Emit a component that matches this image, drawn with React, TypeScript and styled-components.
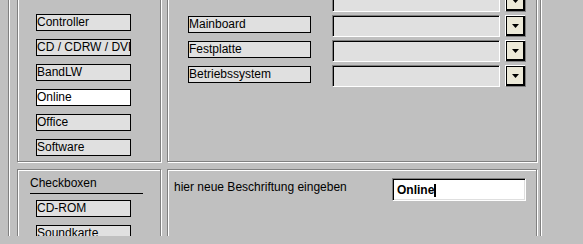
import React from "react";
import styled, { createGlobalStyle } from "styled-components";

const Global = createGlobalStyle`
  html, body { margin: 0; padding: 0; background: #c0c0c0; }
  body { font-family: "Liberation Sans", Arial, sans-serif; font-size: 12px; color: #000; }
`;

const Viewport = styled.div`
  height: 236px;
  overflow: hidden;
`;

const Scroller = styled.div`
  margin-top: -30px;
`;

const OuterGroup = styled.div`
  margin-left: 8px;
  width: 533px;
  box-sizing: border-box;
  border: 1px solid #808080;
  box-shadow: inset 1px 1px 0 #fff, 1px 1px 0 #fff;
  padding: 8px 3px 8px 8px;
`;

const Layout = styled.div`
  display: grid;
  grid-template-columns: 144px 370px;
  column-gap: 6px;
  row-gap: 7px;
`;

const Panel = styled.div<{ $pt: number; $pl: number; $h?: number }>`
  box-sizing: border-box;
  border: 1px solid #808080;
  box-shadow: inset 1px 1px 0 #fff, 1px 1px 0 #fff;
  padding: ${(p) => p.$pt}px 0 5px ${(p) => p.$pl}px;
  ${(p) => (p.$h ? `height: ${p.$h}px;` : "")}
`;

const LabelList = styled.div`
  display: flex;
  flex-direction: column;
  gap: 8px;
`;

const LabelBox = styled.div<{ $w: number; $white?: boolean }>`
  box-sizing: border-box;
  width: ${(p) => p.$w}px;
  height: 17px;
  border: 1px solid #000;
  background: ${(p) => (p.$white ? "#fff" : "#e0e0e0")};
  line-height: 15px;
  white-space: nowrap;
  overflow: hidden;
`;

const FieldGrid = styled.div`
  display: grid;
  grid-template-columns: 123px 189px 27px;
  row-gap: 3px;
  align-items: start;
`;

const FieldRow = styled.div`
  display: contents;
`;

const LabelCell = styled.div`
  padding-top: 1px;
  width: 123px;
`;

const Combo = styled.div`
  box-sizing: border-box;
  margin-left: 21px;
  width: 168px;
  height: 22px;
  background: #e0e0e0;
  border-style: solid;
  border-width: 1px;
  border-color: #808080 #fff #fff #808080;
  box-shadow: inset 1px 1px 0 #000;
`;

const DropButton = styled.div`
  box-sizing: border-box;
  margin-left: 5px;
  width: 21px;
  height: 22px;
  border-style: solid;
  border-width: 1px;
  border-color: #fff #808080 #808080 #fff;
  display: flex;
  align-items: center;
  justify-content: center;
`;

const DropFace = styled.div`
  box-sizing: border-box;
  width: 19px;
  height: 20px;
  background: #ece9d8;
  border-style: solid;
  border-width: 1px 2px 2px 1px;
  border-color: #000;
  display: flex;
  align-items: center;
  justify-content: center;
`;

const Heading = styled.div`
  width: 113px;
  margin-left: 12px;
  padding-top: 6px;
  padding-bottom: 3px;
  line-height: 14px;
  border-bottom: 1px solid #000;
  margin-bottom: 6px;
`;

const Indented = styled.div`
  margin-left: 18px;
`;

const EntryRow = styled.div`
  display: flex;
  align-items: flex-start;
  padding-left: 6px;
  padding-top: 8px;
`;

const EntryLabel = styled.div`
  width: 218px;
  padding-top: 2px;
  line-height: 14px;
`;

const TextInput = styled.div`
  box-sizing: border-box;
  width: 134px;
  height: 23px;
  background: #fff;
  border-style: solid;
  border-width: 1px;
  border-color: #808080 #fff #fff #808080;
  box-shadow: inset 1px 1px 0 #000, inset -1px -1px 0 #dfdfdf;
  padding: 4px 0 0 4px;
  font-weight: bold;
  line-height: 14px;
  display: flex;
  align-items: flex-start;
`;

const Caret = styled.span`
  display: inline-block;
  width: 2px;
  height: 13px;
  background: #000;
  margin-top: 1px;
`;

const Arrow = () => (
  <svg width="7" height="4" viewBox="0 0 7 4">
    <path d="M0 0H7L3.5 4Z" fill="#000" />
  </svg>
);

const leftItems = ["Controller", "CD / CDRW / DVD", "BandLW", "Online", "Office", "Software"];
const rows: (string | null)[] = [null, "Mainboard", "Festplatte", "Betriebssystem"];

export default function App() {
  return (
    <>
      <Global />
      <Viewport>
        <Scroller>
          <OuterGroup>
            <Layout>
              <Panel $pt={34} $pl={18}>
                <LabelList>
                  {leftItems.map((t) => (
                    <LabelBox key={t} $w={95} $white={t === "Online"}>
                      {t}
                    </LabelBox>
                  ))}
                </LabelList>
              </Panel>
              <Panel $pt={10} $pl={20}>
                <FieldGrid>
                  {rows.map((r, i) => (
                    <FieldRow key={i}>
                      <LabelCell>{r ? <LabelBox $w={123}>{r}</LabelBox> : null}</LabelCell>
                      <Combo />
                      <DropButton>
                        <DropFace>
                          <Arrow />
                        </DropFace>
                      </DropButton>
                    </FieldRow>
                  ))}
                </FieldGrid>
              </Panel>
              <Panel $pt={0} $pl={0} $h={100}>
                <Heading>Checkboxen</Heading>
                <Indented>
                  <LabelList>
                    <LabelBox $w={95}>CD-ROM</LabelBox>
                    <LabelBox $w={95}>Soundkarte</LabelBox>
                  </LabelList>
                </Indented>
              </Panel>
              <Panel $pt={0} $pl={0} $h={100}>
                <EntryRow>
                  <EntryLabel>hier neue Beschriftung eingeben</EntryLabel>
                  <TextInput>
                    Online
                    <Caret />
                  </TextInput>
                </EntryRow>
              </Panel>
            </Layout>
          </OuterGroup>
        </Scroller>
      </Viewport>
    </>
  );
}
